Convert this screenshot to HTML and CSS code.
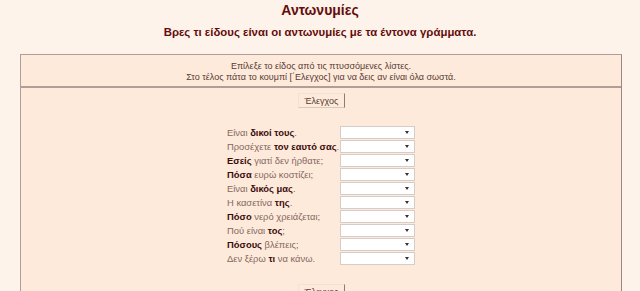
FILE: index.html
```html
<!DOCTYPE html>
<html lang="el">
<head>
    <meta charset="UTF-8" />
    <title>Αντωνυμίες</title>
    <link rel="stylesheet" href="styles.css">
</head>
<body>
    <h1 class="title">Αντωνυμίες</h1>
    <h2 class="subtitle">Βρες τι είδους είναι οι αντωνυμίες με τα έντονα γράμματα.</h2>

    <div class="panel">
        <div class="panel-head">
            <p>Επίλεξε το είδος από τις πτυσσόμενες λίστες.</p>
            <p>Στο τέλος πάτα το κουμπί [΄Ελεγχος] για να δεις αν είναι όλα σωστά.</p>
        </div>
        <div class="panel-body">
            <button class="check-btn">Έλεγχος</button>

            <div class="quiz">
                <div class="quiz-row"><span>Είναι <b>δικοί τους</b>.</span><span class="pick"></span></div>
                <div class="quiz-row"><span>Προσέχετε <b>τον εαυτό σας</b>.</span><span class="pick"></span></div>
                <div class="quiz-row"><span><b>Εσείς</b> γιατί δεν ήρθατε;</span><span class="pick"></span></div>
                <div class="quiz-row"><span><b>Πόσα</b> ευρώ κοστίζει;</span><span class="pick"></span></div>
                <div class="quiz-row"><span>Είναι <b>δικός μας</b>.</span><span class="pick"></span></div>
                <div class="quiz-row"><span>Η κασετίνα <b>της</b>.</span><span class="pick"></span></div>
                <div class="quiz-row"><span><b>Πόσο</b> νερό χρειάζεται;</span><span class="pick"></span></div>
                <div class="quiz-row"><span>Πού είναι <b>τος</b>;</span><span class="pick"></span></div>
                <div class="quiz-row"><span><b>Πόσους</b> βλέπεις;</span><span class="pick"></span></div>
                <div class="quiz-row"><span>Δεν ξέρω <b>τι</b> να κάνω.</span><span class="pick"></span></div>
            </div>

            <button class="check-btn">Έλεγχος</button>
        </div>
    </div>
</body>
</html>
```

FILE: styles.css
```css
:root {
    --page-bg: #fdf3ea;
    --cell-bg: #fdeadb;
    --line: #b39d96;
    --title: #650c0c;
    --soft-text: #86675f;
    --bold-text: #3c0c0c;
}
body {
    margin: 0;
    background-color: var(--page-bg);
    font-family: 'Liberation Sans', Arial, sans-serif;
}
.title {
    margin: 0;
    height: 20px;
    line-height: 20px;
    text-align: center;
    font-size: 14px;
    color: var(--title);
}
.subtitle {
    margin: 0;
    padding-top: 2px;
    height: 20px;
    line-height: 20px;
    text-align: center;
    font-size: 11.4px;
    color: var(--title);
}
.panel {
    margin: 12px 18px 0 20px;
    border-top: 1px solid var(--line);
    border-left: 1px solid var(--line);
    border-right: 1px solid #9c8780;
    background-color: var(--cell-bg);
}
.panel-head {
    padding: 6px 0 3px;
    border-bottom: 2px solid var(--line);
    text-align: center;
    font-size: 9px;
    line-height: 11px;
    color: #5a3a34;
}
.panel-head p { margin: 0; }
.panel-body {
    display: flex;
    flex-direction: column;
    align-items: center;
    padding: 5px 0 10px;
}
.check-btn {
    font-family: 'Liberation Sans', Arial, sans-serif;
    font-size: 9px;
    color: #5a3a34;
    background-color: var(--cell-bg);
    border: 1px solid #efe2d8;
    border-right-color: #8e7b75;
    border-bottom-color: #d8c8bf;
    padding: 0 6px;
    height: 15px;
    width: 47px;
}
.quiz {
    display: flex;
    flex-direction: column;
    margin: 17px 0 19px 0;
}
.quiz-row {
    display: grid;
    grid-template-columns: 113px 75px;
    height: 14px;
    align-items: center;
    font-size: 9.4px;
    color: var(--soft-text);
    white-space: nowrap;
}
.quiz-row b { color: var(--bold-text); }
.pick {
    position: relative;
    height: 11px;
    background-color: #fff;
    border: 1px solid #d6cdc8;
}
.pick::after {
    content: '';
    position: absolute;
    right: 5px;
    top: 4px;
    border-left: 2px solid transparent;
    border-right: 2px solid transparent;
    border-top: 3px solid #333;
}
```
